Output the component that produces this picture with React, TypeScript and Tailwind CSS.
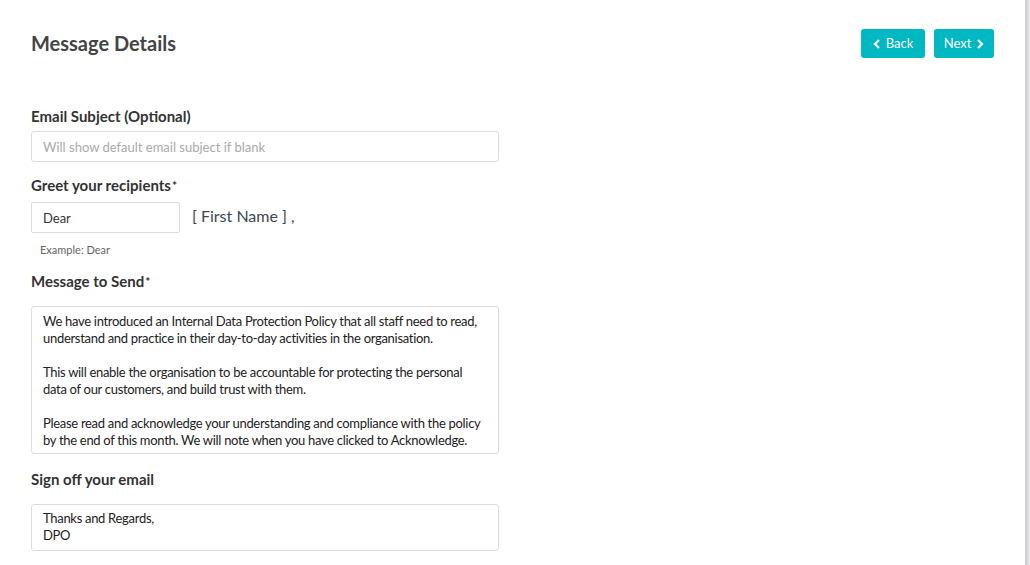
import React from 'react';

const font = { fontFamily: 'Lato, "Noto Sans", "Liberation Sans", sans-serif' };

const Label: React.FC<{ text: string; required?: boolean }> = ({ text, required }) => (
  <div className="text-[15px] font-bold text-[#333] leading-5">
    {text}
    {required && <sup className="text-[12px] ml-[1px] relative -top-[1px]">*</sup>}
  </div>
);

export default function App() {
  const message = [
    ['We have introduced an Internal Data Protection Policy that all staff need to read,', 'understand and practice in their day-to-day activities in the organisation.'],
    ['This will enable the organisation to be accountable for protecting the personal', 'data of our customers, and build trust with them.'],
    ['Please read and acknowledge your understanding and compliance with the policy', 'by the end of this month. We will note when you have clicked to Acknowledge.'],
  ];

  return (
    <div className="flex h-[565px] w-full bg-white overflow-hidden" style={font}>
      <div className="flex-1 pl-[31px] pr-[31px] pt-[29px]">
        <header className="flex items-start justify-between">
          <h1 className="text-[20px] font-bold text-[#444] leading-[29px]">Message Details</h1>
          <div className="flex gap-[9px]">
            <button className="flex items-center gap-[5px] h-[29px] w-[64px] justify-center rounded-[3px] bg-[#00b8c2] text-white text-[13px]">
              <svg width="8" height="10" viewBox="0 0 8 10" fill="none" stroke="currentColor" strokeWidth="2.2">
                <path d="M6 1L2 5l4 4" />
              </svg>
              Back
            </button>
            <button className="flex items-center gap-[5px] h-[29px] w-[60px] justify-center rounded-[3px] bg-[#00b8c2] text-white text-[13px]">
              Next
              <svg width="8" height="10" viewBox="0 0 8 10" fill="none" stroke="currentColor" strokeWidth="2.2">
                <path d="M2 1l4 4-4 4" />
              </svg>
            </button>
          </div>
        </header>

        <form className="w-[468px] mt-[48px] flex flex-col">
          <Label text="Email Subject (Optional)" />
          <input
            className="mt-[5px] h-[31px] w-full rounded-[3px] border border-[#ddd] px-[11px] text-[13px] text-[#333] placeholder:text-[#aaa] outline-none"
            placeholder="Will show default email subject if blank"
          />

          <div className="mt-[13px]">
            <Label text="Greet your recipients" required />
          </div>
          <div className="mt-[7px] flex items-center gap-[12px]">
            <input
              className="h-[31px] w-[149px] rounded-[2px] border border-[#ddd] px-[11px] text-[13px] text-[#333] outline-none"
              defaultValue="Dear"
            />
            <span className="text-[16px] text-[#3b4653] -mt-[4px]">[ First Name ] ,</span>
          </div>
          <div className="mt-[9px] pl-[9px] text-[11px] text-[#666] leading-4">Example: Dear</div>

          <div className="mt-[13px]">
            <Label text="Message to Send" required />
          </div>
          <div className="mt-[15px] h-[148px] rounded-[3px] border border-[#ddd] px-[11px] pt-[6px] text-[13px] leading-[17px] tracking-[-0.3px] text-[#222] flex flex-col gap-[17px] whitespace-nowrap">
            {message.map((p, i) => (
              <p key={i}>
                {p[0]}
                <br />
                {p[1]}
              </p>
            ))}
          </div>

          <div className="mt-[15px]">
            <Label text="Sign off your email" />
          </div>
          <div className="mt-[15px] h-[47px] rounded-[3px] border border-[#ddd] px-[11px] pt-[5px] text-[13px] leading-[17px] tracking-[-0.3px] text-[#222]">
            <p>Thanks and Regards,</p>
            <p>DPO</p>
          </div>
        </form>
      </div>
      <div className="w-[5px] h-full bg-gradient-to-r from-[#c8c8cc] to-[#ececee]" />
    </div>
  );
}
